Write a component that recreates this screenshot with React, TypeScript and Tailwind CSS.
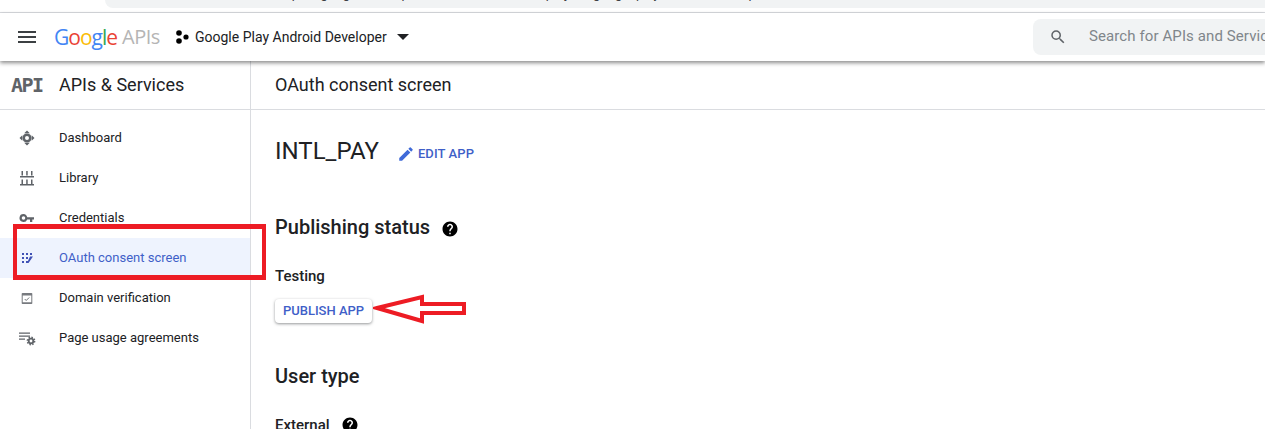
import React from "react";

const Google = () => (
  <span className="block w-[68px] shrink-0 text-[21px] tracking-[-1px] leading-none font-['Open_Sans',sans-serif]">
    <span className="text-[#4285f4]">G</span>
    <span className="text-[#ea4335]">o</span>
    <span className="text-[#fbbc05]">o</span>
    <span className="text-[#4285f4]">g</span>
    <span className="text-[#34a853]">l</span>
    <span className="text-[#ea4335]">e</span>
  </span>
);

const I = ({ children }: { children: React.ReactNode }) => (
  <svg width="24" height="24" viewBox="0 0 24 24" fill="#5f6368" className="shrink-0">{children}</svg>
);

const nav: { label: string; active?: boolean; icon: React.ReactNode }[] = [
  {
    label: "Dashboard",
    icon: (
      <I>
        <path d="M12 4.500l2.800 2.800h-5.600zM12 19.500l-2.800-2.800h5.600zM4.500 12l2.800-2.800v5.600zM19.500 12l-2.800 2.800V9.200z" />
        <circle cx="12" cy="12" r="3.300" fill="none" stroke="#5f6368" strokeWidth="2.600" />
      </I>
    ),
  },
  {
    label: "Library",
    icon: (
      <I>
        <path d="M6.500 5h1.500v4.500H6.500zM11.200 5h1.500v4.500h-1.500zM16 5h1.500v4.500H16zM5 10h14v1.400H5zM6.500 13.500h1.500v4.500H6.500zM11.200 13.500h1.500v4.500h-1.500zM16 13.500h1.500v4.500H16zM5 18h14v1.400H5z" />
      </I>
    ),
  },
  {
    label: "Credentials",
    icon: (
      <I>
        <path d="M8.500 8a4 4 0 1 0 3.700 5.500H15V16h2.300v-2.500H19v-2.200h-6.800A4 4 0 0 0 8.500 8zm0 2.200a1.800 1.800 0 1 1 0 3.600 1.800 1.800 0 0 1 0-3.600z" />
      </I>
    ),
  },
  {
    label: "OAuth consent screen",
    active: true,
    icon: (
      <svg width="24" height="24" viewBox="0 0 24 24" fill="#3f51b5" className="shrink-0">
        <path d="M7 7h2v2H7zM11 7h2v2h-2zM15 7h2v2h-2zM7 11h2v2H7zM11 11h2v2h-2zM7 15h2v2H7zM11 15h2v2h-2zM15 10.500h3l-4.500 6.500-1-1z" />
      </svg>
    ),
  },
  {
    label: "Domain verification",
    icon: (
      <I>
        <path d="M7.500 7h9a.8.8 0 0 1 .8.8v9.400a.8.8 0 0 1-.8.8h-9a.8.8 0 0 1-.8-.8V7.800a.8.8 0 0 1 .8-.8zm.2 2.500v6.700h8.600V9.500z" fillOpacity="0.85" />
        <path d="M9.700 13l1.500 1.500 3-3" fill="none" stroke="#5f6368" strokeWidth="0.9" />
      </I>
    ),
  },
  {
    label: "Page usage agreements",
    icon: (
      <I>
        <path d="M4 6.500h11v1.300H4zM4 9.500h11v1.300H4zM4 12.500h6v1.300H4z" />
        <circle cx="16" cy="15" r="2.300" fill="none" stroke="#5f6368" strokeWidth="1.800" />
        <circle cx="16" cy="15" r="3.700" fill="none" stroke="#5f6368" strokeWidth="1.400" strokeDasharray="1.500 1.400" />
      </I>
    ),
  },
];

const Help = ({ d = "" }: { d?: string }) => (
  <svg width="18" height="18" viewBox="0 0 24 24" fill="#000" className={d}>
    <path d="M12 2C6.480 2 2 6.480 2 12s4.480 10 10 10 10-4.480 10-10S17.520 2 12 2zm1 17h-2v-2h2v2zm2.070-7.750l-.900.920C13.450 12.900 13 13.500 13 15h-2v-.500c0-1.100.450-2.100 1.170-2.830l1.240-1.260c.370-.360.590-.860.590-1.410 0-1.100-.900-2-2-2s-2 .900-2 2H8c0-2.210 1.790-4 4-4s4 1.790 4 4c0 .880-.360 1.680-.930 2.250z" />
  </svg>
);

export default function App() {
  return (
    <div className="h-[429px] w-[1265px] overflow-hidden bg-white font-['Roboto',sans-serif] relative text-[#202124]">
      {/* browser strip */}
      <div className="h-[13px] bg-white border-b border-[#dadce0] flex items-start overflow-hidden">
        <div className="w-[105px] shrink-0 pl-[12px] -mt-[12px] text-[#5f6368] text-[14px] leading-[14px] tracking-[18px] whitespace-nowrap">←→C</div>
        <div className="flex-1 h-[8px] bg-[#f1f3f4] rounded-bl-[10px] overflow-hidden">
          <div className="-mt-[13px] ml-[100px] text-[13px] leading-[14px] text-[#3c4043] whitespace-nowrap">console.developers.google.com/apis/credentials/consent?project=google-play-android-developer</div>
        </div>
      </div>

      {/* top bar */}
      <header className="relative z-10 h-[48px] flex items-center bg-white shadow-[0_2px_4px_rgba(0,0,0,0.45)]">
        <svg width="24" height="24" viewBox="0 0 24 24" fill="#3c4043" className="ml-[15px] shrink-0">
          <path d="M3 18h18v-2H3zM3 13h18v-2H3zM3 6v2h18V6z" />
        </svg>
        <div className="ml-[15px] flex items-center w-[107px] shrink-0">
          <Google />
          <span className="text-[20px] leading-none text-[#b5b5b5] font-['Open_Sans',sans-serif] tracking-[-0.5px]">APIs</span>
        </div>
        <svg width="16" height="16" viewBox="0 0 16 16" fill="#000" className="ml-[13px] shrink-0">
          <circle cx="5" cy="4" r="2.800" /><circle cx="5" cy="12" r="2.800" /><circle cx="12" cy="8" r="2.600" />
        </svg>
        <span className="ml-[5px] text-[14px] text-[#202124] whitespace-nowrap w-[204px]">Google Play Android Developer</span>
        <svg width="12" height="6" viewBox="0 0 12 6" fill="#202124" className="-ml-[2px]"><path d="M0 0h12L6 6z" /></svg>
        <div className="ml-auto w-[232px] h-[36px] -mt-[1px] bg-[#f1f3f4] rounded-l-[8px] flex items-center overflow-hidden shrink-0">
          <svg width="18" height="18" viewBox="0 0 24 24" fill="#5f6368" className="ml-[16px] shrink-0">
            <path d="M15.500 14h-.790l-.280-.270A6.470 6.470 0 0 0 16 9.500 6.500 6.500 0 1 0 9.500 16c1.610 0 3.090-.590 4.230-1.570l.270.280v.790l5 4.990L20.490 19l-4.990-5zm-6 0C7.010 14 5 11.990 5 9.500S7.010 5 9.500 5 14 7.010 14 9.500 11.990 14 9.500 14z" />
          </svg>
          <span className="ml-[22px] text-[15px] text-[#80868b] whitespace-nowrap tracking-[0.1px]">Search for APIs and Services</span>
        </div>
      </header>

      <div className="flex h-[368px]">
        {/* sidebar */}
        <aside className="w-[251px] shrink-0 border-r border-[#dadce0] relative">
          <div className="h-[49px] pb-[1px] flex items-center border-b border-[#dadce0]">
            <span className="ml-[11px] w-[48px] text-[20px] font-bold text-[#5f6368] font-['DejaVu_Sans_Mono',monospace] leading-none tracking-[-1.5px]">API</span>
            <span className="text-[18px] text-[#202124]">APIs &amp; Services</span>
          </div>
          <nav className="pt-[8px]">
            {nav.map((n) => (
              <div key={n.label} className={`h-[40px] flex items-center pl-[15px] ${n.active ? "bg-[#eef3fe]" : ""}`}>
                {n.icon}
                <span className={`ml-[20px] text-[13px] ${n.active ? "text-[#3f5fc8]" : "text-[#202124]"}`}>{n.label}</span>
              </div>
            ))}
          </nav>
          <div className="absolute left-[13px] top-[163px] w-[253px] h-[56px] border-x-[4px] border-y-[5px] border-[#ed1c24] pointer-events-none z-10" />
        </aside>

        {/* main */}
        <main className="flex-1 min-w-0">
          <div className="h-[49px] pb-[1px] border-b border-[#dadce0] flex items-center pl-[24px] text-[18px] text-[#202124]">OAuth consent screen</div>
          <div className="pl-[24px]">
            <div className="mt-[23px] flex items-center h-[36px]">
              <span className="text-[24px] text-[#202124]">INTL_PAY</span>
              <div className="mt-[6px] flex items-center">
                <svg width="18" height="18" viewBox="0 0 24 24" fill="#3f6ad8" className="ml-[18px] shrink-0">
                  <path d="M3 17.250V21h3.750L17.810 9.940l-3.750-3.750L3 17.250zM20.710 7.040a1 1 0 0 0 0-1.410l-2.340-2.340a1 1 0 0 0-1.410 0l-1.830 1.830 3.750 3.750 1.830-1.830z" />
                </svg>
                <span className="ml-[3px] text-[13px] font-medium text-[#3f5fc8] tracking-[0.1px]">EDIT APP</span>
              </div>
            </div>
            <div className="mt-[44px] flex items-center h-[28px]">
              <span className="text-[20px] font-medium text-[#202124]">Publishing status</span>
              <Help d="ml-[11px] mt-[4px]" />
            </div>
            <div className="mt-[25px] text-[15px] font-medium leading-[20px] text-[#202124]">Testing</div>
            <div className="mt-[13px] flex items-center">
              <button className="h-[24px] w-[97px] rounded-[4px] bg-white text-[13px] font-medium text-[#3f5fc8] shadow-[0_1px_3px_rgba(60,64,67,0.55)]">PUBLISH APP</button>
              <svg width="96" height="32" viewBox="0 0 96 32" className="ml-[1px] -my-[4px] -translate-y-[2px] shrink-0">
                <path d="M4 15L49 4v7h42v9H49v8z" fill="#fff" stroke="#ed1c24" strokeWidth="4" />
              </svg>
            </div>
            <div className="mt-[39px] text-[20px] font-medium leading-[28px] text-[#202124]">User type</div>
            <div className="mt-[24px] flex items-center">
              <span className="text-[15px] font-medium text-[#202124]">External</span>
              <Help d="ml-[11px]" />
            </div>
          </div>
        </main>
      </div>
    </div>
  );
}
